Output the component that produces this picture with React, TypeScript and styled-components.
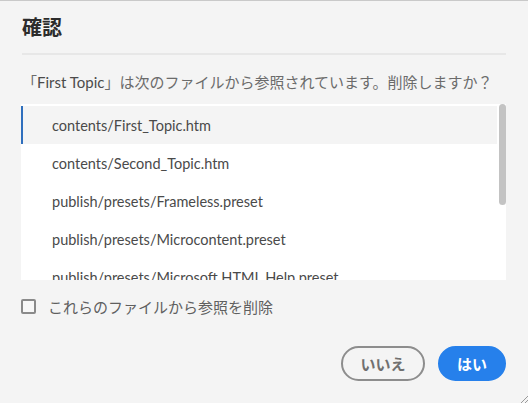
import React from "react";
import styled, { createGlobalStyle } from "styled-components";

const Global = createGlobalStyle`
  html, body { margin: 0; padding: 0; background: #f4f4f4; }
  body { font-family: Lato, "Noto Sans CJK JP", sans-serif; }
  * { box-sizing: border-box; }
`;

const Dialog = styled.div`
  position: relative;
  width: 528px;
  height: 403px;
  background: #f4f4f4;
  border-top: 1px solid #c9c9c9;
  padding: 0 22px 0 21px;
  display: flex;
  flex-direction: column;
  overflow: hidden;
`;

const Title = styled.h1`
  margin: 16px 0 0 1px;
  font-family: "Noto Sans CJK JP", sans-serif;
  font-size: 20px;
  line-height: 20px;
  font-weight: 700;
  color: #2c2c2c;
`;

const Divider = styled.hr`
  margin: 16px 0 0 1px;
  border: none;
  height: 2px;
  background: #e7e7e7;
`;

const Message = styled.p`
  margin: 17px 0 0 1px;
  font-family: Lato, "Noto Sans CJK JP", sans-serif;
  font-size: 15px;
  line-height: 20px;
  color: #6b6b6b;
  white-space: nowrap;
`;

const Topic = styled.span`
  color: #4b4b4b;
`;

const ListBox = styled.div`
  margin-top: 12px;
  height: 176px;
  background: #ffffff;
  display: flex;
  overflow: hidden;
`;

const Rows = styled.ul`
  flex: 1;
  list-style: none;
  margin: 0;
  padding: 2px 0 0 0;
`;

const Row = styled.li<{ $selected?: boolean }>`
  height: 38px;
  display: flex;
  align-items: center;
  padding-left: ${(p) => (p.$selected ? "29px" : "31px")};
  border-left: ${(p) => (p.$selected ? "2px solid #2f6fbd" : "none")};
  background: ${(p) => (p.$selected ? "#f4f4f4" : "transparent")};
  font-family: Lato, sans-serif;
  font-size: 14.5px;
  color: #4a4a4a;
  white-space: nowrap;
`;

const Track = styled.div`
  width: 9px;
  padding: 0 0 0 2px;
`;

const Thumb = styled.div`
  width: 7px;
  height: 101px;
  background: #c3c3c3;
  border-radius: 4px;
`;

const CheckRow = styled.label`
  margin-top: 19px;
  display: flex;
  align-items: center;
  gap: 12px;
  font-family: "Noto Sans CJK JP", sans-serif;
  font-size: 15px;
  line-height: 15px;
  color: #5f5f5f;
`;

const Box = styled.span`
  width: 15px;
  height: 15px;
  border: 2px solid #8a8a8a;
  border-radius: 2px;
  background: #f7f7f7;
`;

const Actions = styled.div`
  margin-top: 32px;
  display: flex;
  justify-content: flex-end;
  gap: 13px;
`;

const Button = styled.button<{ $primary?: boolean }>`
  height: 35px;
  width: ${(p) => (p.$primary ? "68px" : "84px")};
  border-radius: 18px;
  border: 2px solid ${(p) => (p.$primary ? "#2680eb" : "#8d8d8d")};
  background: ${(p) => (p.$primary ? "#2680eb" : "transparent")};
  color: ${(p) => (p.$primary ? "#ffffff" : "#707070")};
  font-family: "Noto Sans CJK JP", sans-serif;
  font-weight: 700;
  font-size: 15px;
  padding: 0;
  display: flex;
  align-items: center;
  justify-content: center;
`;

const Grip = styled.svg`
  position: absolute;
  right: 0;
  bottom: 0;
`;

const files = [
  "contents/First_Topic.htm",
  "contents/Second_Topic.htm",
  "publish/presets/Frameless.preset",
  "publish/presets/Microcontent.preset",
  "publish/presets/Microsoft HTML Help.preset",
];

export default function App() {
  return (
    <>
      <Global />
      <Dialog>
        <Title>確認</Title>
        <Divider />
        <Message>
          「<Topic>First Topic</Topic>」は次のファイルから参照されています。削除しますか？
        </Message>
        <ListBox>
          <Rows>
            {files.map((f, i) => (
              <Row key={f} $selected={i === 0}>
                {f}
              </Row>
            ))}
          </Rows>
          <Track>
            <Thumb />
          </Track>
        </ListBox>
        <CheckRow>
          <Box />
          これらのファイルから参照を削除
        </CheckRow>
        <Actions>
          <Button>いいえ</Button>
          <Button $primary>はい</Button>
        </Actions>
        <Grip width="9" height="9" viewBox="0 0 9 9">
          <path d="M9 2 L2 9 M9 6 L6 9" stroke="#9a9a9a" strokeWidth="1" />
        </Grip>
      </Dialog>
    </>
  );
}
